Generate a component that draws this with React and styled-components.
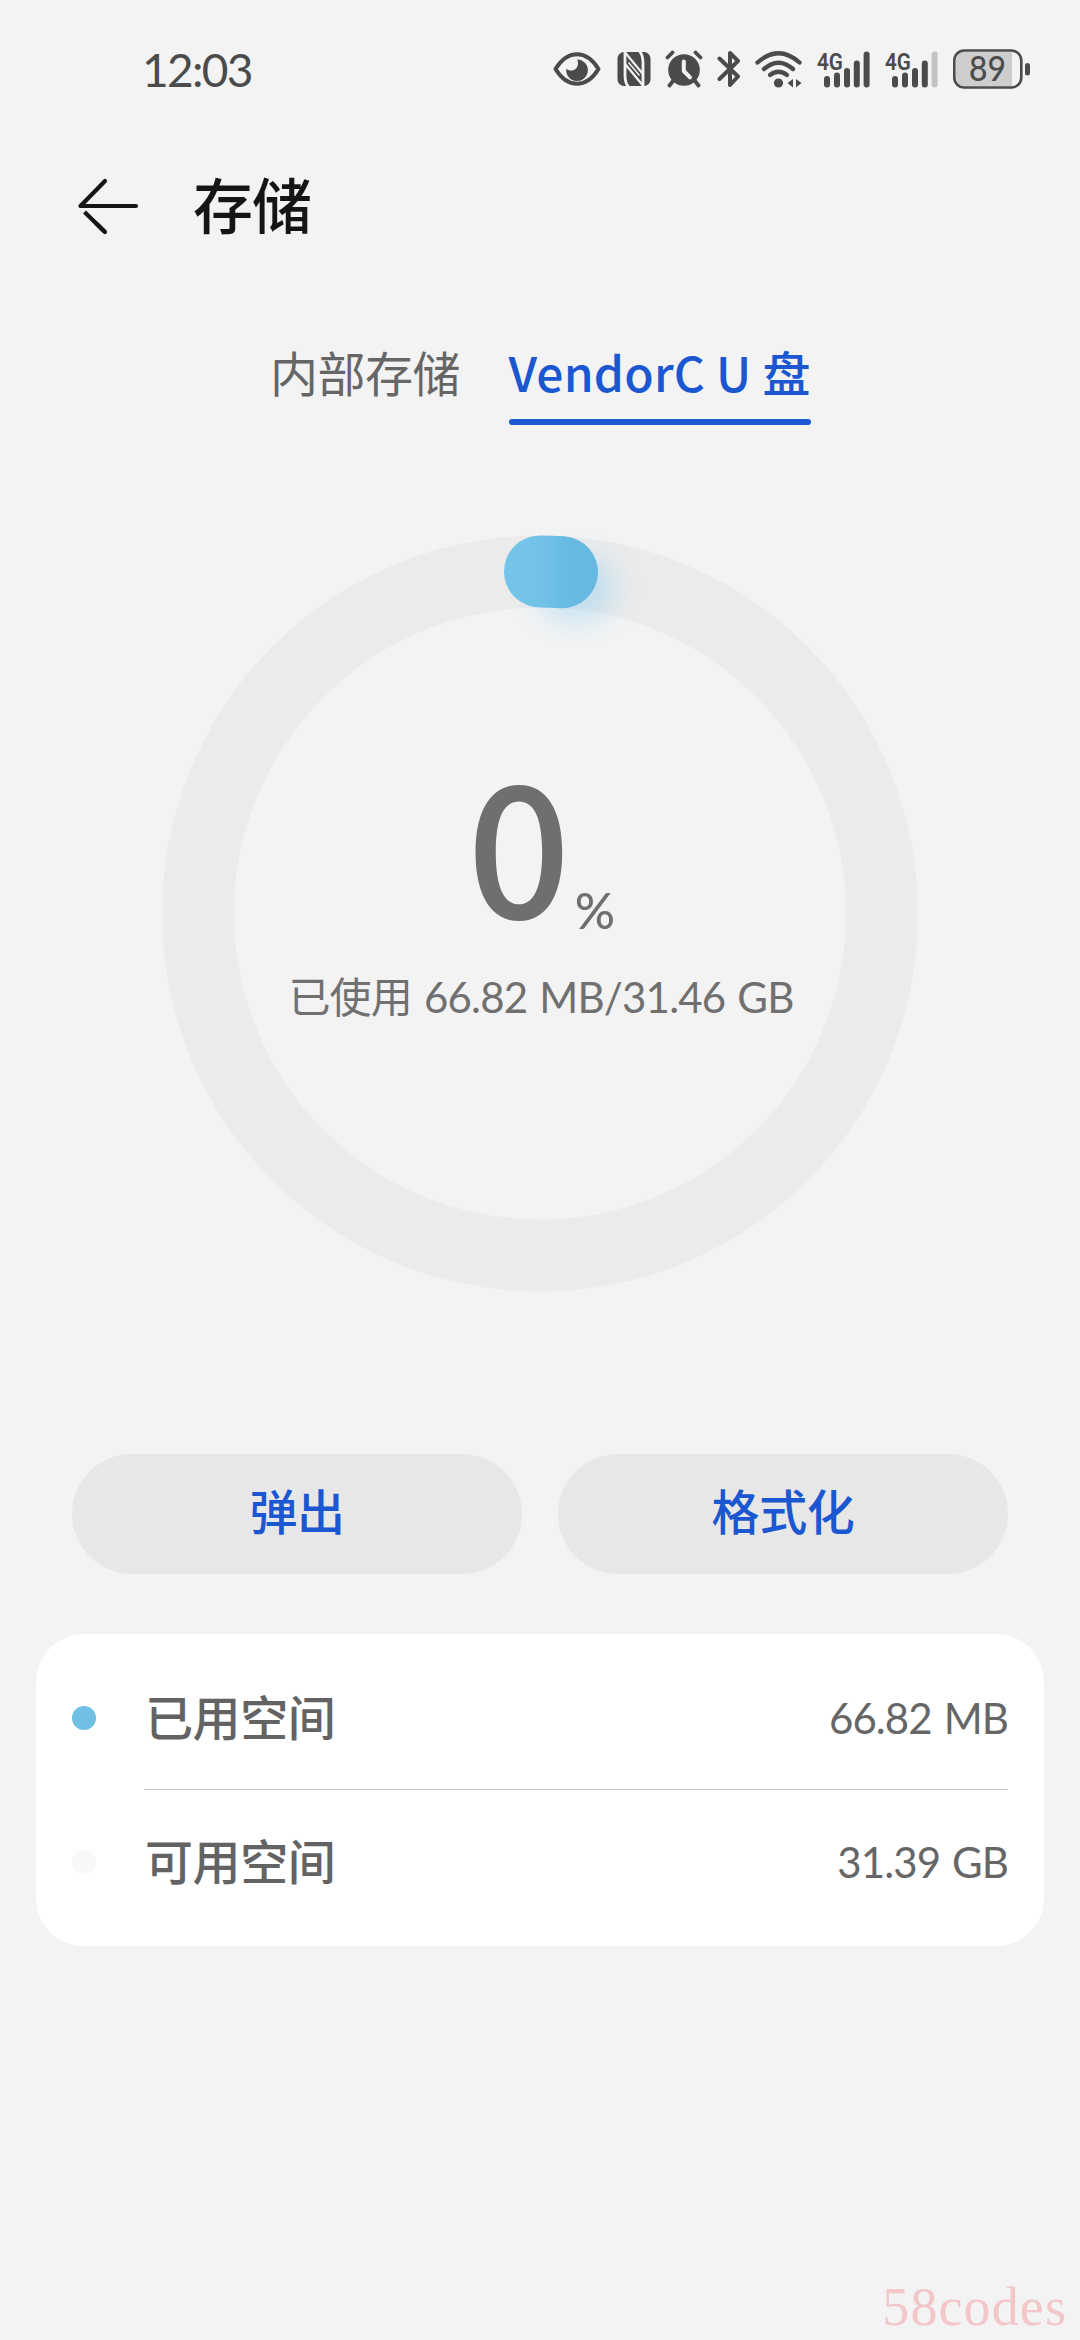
import styled, { createGlobalStyle } from "styled-components";

const GlobalStyle = createGlobalStyle`
  * {
    box-sizing: border-box;
  }

  body {
    margin: 0;
    background: #f3f3f3;
    font-family: Lato, "Noto Sans CJK SC", sans-serif;
  }
`;

const Root = styled.div`
  position: relative;
  width: 1080px;
  height: 2340px;
  overflow: hidden;
  display: flex;
  flex-direction: column;
  background: #f3f3f3;
`;

const StatusBar = styled.header`
  height: 138px;
  padding: 0 49px 0 142px;
  display: flex;
  align-items: center;
  justify-content: space-between;
  color: #4b4b4b;
`;

const Clock = styled.span`
  padding-top: 2px;
  font-size: 46px;
  line-height: 60px;
  letter-spacing: -1.7px;
`;

const StatusIcons = styled.div`
  display: flex;
  align-items: center;

  svg {
    display: block;
  }
`;

const IconSlot = styled.span`
  margin-right: ${(props) => props.$gap}px;
`;

const TitleBar = styled.div`
  height: 136px;
  padding-left: 76px;
  display: flex;
  align-items: center;

  svg {
    display: block;
  }
`;

const Title = styled.h1`
  margin: 0 0 0 53px;
  font-size: 60px;
  line-height: 80px;
  font-weight: 500;
  letter-spacing: -1px;
  color: #151515;
`;

const Tabs = styled.nav`
  height: 151px;
  padding-top: 62px;
  display: flex;
  justify-content: center;
  gap: 48px;
`;

const Tab = styled.div`
  height: 89px;
  width: ${(props) => props.$width}px;
  padding-top: 5px;
  font-family: "Noto Sans CJK SC", sans-serif;
  font-size: 48px;
  line-height: 60px;
  white-space: nowrap;
  text-align: center;
  letter-spacing: ${(props) => (props.$active ? "0.2px" : "-0.5px")};
  font-weight: ${(props) => (props.$active ? 500 : 400)};
  color: ${(props) => (props.$active ? "#1a57d0" : "#666")};

  &::after {
    content: "";
    display: block;
    margin-top: 18px;
    height: 6px;
    border-radius: 3px;
    background: ${(props) => (props.$active ? "#1a57d0" : "transparent")};
  }
`;

const Usage = styled.section`
  height: 1029px;
  padding-top: 60px;
  display: grid;
  grid-template: 860px / 1080px;

  > * {
    grid-area: 1 / 1;
  }
`;

const UsageText = styled.div`
  padding: 254px 0 0 2px;
  display: flex;
  flex-direction: column;
  align-items: center;
  color: #6f6f6f;
`;

const Percent = styled.div`
  height: 200px;
  display: flex;
  align-items: baseline;
  font-family: "Noto Sans CJK SC", sans-serif;
  font-size: 182px;
  line-height: 200px;
  font-weight: 500;
`;

const PercentSign = styled.span`
  position: relative;
  top: 11px;
  margin-left: 4px;
  font-family: Lato, sans-serif;
  font-size: 50px;
  line-height: 60px;
`;

const Caption = styled.p`
  margin: 28px 0 0;
  font-size: 42px;
  line-height: 60px;
  letter-spacing: -0.8px;
  word-spacing: 2px;
  color: #707070;
`;

const Actions = styled.div`
  padding: 0 72px;
  display: flex;
  gap: 36px;
`;

const ActionButton = styled.button`
  flex: 1;
  height: 120px;
  padding: 0 0 10px;
  border: none;
  border-radius: 60px;
  background: #e7e7e7;
  color: #1a57d0;
  font-family: inherit;
  font-size: 48px;
  font-weight: 500;
  letter-spacing: -0.4px;
`;

const Card = styled.section`
  margin: 60px 36px 0;
  padding: 12px 36px;
  border-radius: 48px;
  background: #fff;
`;

const Row = styled.div`
  height: 144px;
  display: flex;
  align-items: center;
`;

const Dot = styled.span`
  width: 24px;
  height: 24px;
  margin-right: 48px;
  border-radius: 50%;
  background: ${(props) => props.$color};
`;

const RowBody = styled.div`
  flex: 1;
  height: 144px;
  display: flex;
  align-items: center;
  justify-content: space-between;
  border-bottom: 1px solid ${(props) => (props.$divider ? "#c4c4c4" : "transparent")};
`;

const RowLabel = styled.span`
  padding: 0 0 6px 1px;
  font-size: 48px;
  font-weight: 500;
  letter-spacing: -0.4px;
  color: #636363;
`;

const RowValue = styled.span`
  font-size: 42px;
  letter-spacing: -0.9px;
  word-spacing: 2px;
  color: #666;
`;

const Watermark = styled.div`
  position: absolute;
  right: 13px;
  bottom: 4px;
  font-family: "Liberation Serif", serif;
  font-size: 54px;
  line-height: 58px;
  letter-spacing: 1.1px;
  color: #f3c6ca;
`;

const EyeIcon = () => (
  <svg width="48" height="36" viewBox="0 0 48 36" fill="none">
    <path
      d="M2.5 18C8 9 15 3.2 24 3.2S40 9 45.5 18C40 27 33 32.8 24 32.8S8 27 2.5 18Z"
      stroke="#4b4b4b"
      strokeWidth="4"
      strokeLinejoin="round"
    />
    <path
      d="M24 8.500a10.800 10.800 0 1 1-10.600 9c2.400 3 8 2.600 10.300-.8 1.900-2.900 1.500-6.400.3-8.200Z"
      fill="#4b4b4b"
    />
  </svg>
);

const NfcIcon = () => (
  <svg width="34" height="36" viewBox="0 0 34 36" fill="none" stroke="#f3f3f3">
    <rect x="0.500" y="1" width="33" height="34" rx="6.500" fill="#4b4b4b" stroke="none" />
    <path d="M8 0V24Q8 32 11.500 36M26 36V12Q26 4 22.500 0" strokeWidth="2.800" />
    <path d="M8.500 2L25.500 22.500M8.500 13.500L25.500 34" strokeWidth="2.200" />
    <path d="M11.500 11.500L22.500 24.500" strokeWidth="1.400" />
  </svg>
);

const AlarmIcon = () => (
  <svg width="38" height="38" viewBox="0 0 38 38" fill="none" strokeLinecap="round">
    <circle cx="19" cy="20" r="15.800" fill="#4b4b4b" />
    <path
      d="M2.500 7.500L7.500 2.500M30.500 2.500L35.500 7.500M8 31L4.500 35.500M30 31L33.500 35.500"
      stroke="#4b4b4b"
      strokeWidth="3.800"
    />
    <path d="M18.800 11.500V21L25 27.300" stroke="#f3f3f3" strokeWidth="4" strokeLinejoin="round" />
  </svg>
);

const BluetoothIcon = () => (
  <svg width="24" height="38" viewBox="0 0 24 38" fill="none">
    <path
      d="M2.500 8.500L21 26.500L13 35V3L21 11L2.500 29"
      stroke="#4b4b4b"
      strokeWidth="4"
      strokeLinecap="round"
      strokeLinejoin="round"
    />
  </svg>
);

const WifiIcon = () => (
  <svg width="48" height="38" viewBox="0 0 48 38" fill="none" stroke="#4b4b4b" strokeLinecap="round">
    <path d="M2.500 12.500Q23.500-6 44.500 12.500" strokeWidth="4.300" />
    <path d="M9 19Q23.500 6.500 38 19" strokeWidth="4.300" />
    <path d="M15 25Q23.500 18.500 32 25" strokeWidth="4.300" />
    <circle cx="23.500" cy="33" r="4.600" fill="#4b4b4b" stroke="none" />
    <path d="M38 29V37.500L32.500 33ZM41 29V37.500L46.500 33Z" fill="#4b4b4b" stroke="none" />
  </svg>
);

const SIGNAL_BARS = [
  { x: 7, y: 26 },
  { x: 17, y: 22.5 },
  { x: 27, y: 18 },
  { x: 36.8, y: 10.5 },
  { x: 46.6, y: 1.5 },
];

const SignalIcon = ({ level }) => (
  <svg width="54" height="54" viewBox="0 -8 54 54">
    <text
      x="0"
      y="19.5"
      fill="#4b4b4b"
      fontFamily="Roboto, sans-serif"
      fontSize="24.5"
      fontWeight="600"
      textLength="26"
      lengthAdjust="spacingAndGlyphs"
    >
      4G
    </text>
    {SIGNAL_BARS.map((bar, i) => (
      <rect
        key={bar.x}
        x={bar.x}
        y={bar.y}
        width="6"
        height={37.5 - bar.y}
        rx="3"
        fill={i < level ? "#4b4b4b" : "#c3c3c3"}
      />
    ))}
  </svg>
);

const BatteryIcon = ({ value }) => (
  <svg width="78" height="52" viewBox="0 -6 78 52">
    <path d="M12 3H59V37H12Q3 37 3 28V12Q3 3 12 3Z" fill="#cdcdcd" />
    <rect x="1.300" y="1.500" width="67" height="37" rx="10" fill="none" stroke="#4b4b4b" strokeWidth="2.600" />
    <rect x="72" y="14" width="5" height="12.500" rx="2.500" fill="#4b4b4b" />
    <text
      x="34.5"
      y="32"
      textAnchor="middle"
      fill="#4b4b4b"
      fontFamily="Lato, sans-serif"
      fontSize="34"
      fontWeight="500"
      textLength="37"
      lengthAdjust="spacingAndGlyphs"
    >
      {value}
    </text>
  </svg>
);

const BackIcon = () => (
  <svg width="64" height="60" viewBox="0 0 64 60" fill="none" stroke="#151515" strokeWidth="4.200" strokeLinecap="round">
    <path d="M29 5L4.500 30H60" strokeLinejoin="round" />
    <path d="M8.500 36L29 56" strokeLinecap="butt" />
    <path d="M20 47.200L29 56" />
  </svg>
);

const UsageRing = () => (
  <svg width="1080" height="860" viewBox="0 485 1080 860" fill="none">
    <defs>
      <linearGradient id="arc" gradientUnits="userSpaceOnUse" x1="530" y1="0" x2="575" y2="0">
        <stop offset="0" stopColor="#74c3e9" />
        <stop offset="1" stopColor="#67b9e1" />
      </linearGradient>
      <filter id="glow" x="-60%" y="-60%" width="220%" height="220%">
        <feGaussianBlur stdDeviation="14" />
      </filter>
    </defs>
    <circle cx="540" cy="913.500" r="342" stroke="#ebebeb" strokeWidth="72" />
    <ellipse cx="576" cy="588" rx="40" ry="34" fill="#8fd0f2" opacity="0.450" filter="url(#glow)" />
    <path
      d="M540 571.500A342 342 0 0 1 562 572.200"
      stroke="url(#arc)"
      strokeWidth="72"
      strokeLinecap="round"
    />
  </svg>
);

const SPACES = [
  { label: "已用空间", value: "66.82 MB", color: "#6fc0e4" },
  { label: "可用空间", value: "31.39 GB", color: "#f8f8f8" },
];

export default function App() {
  return (
    <>
      <GlobalStyle />
      <Root>
        <StatusBar>
          <Clock>12:03</Clock>
          <StatusIcons>
            <IconSlot $gap={16}>
              <EyeIcon />
            </IconSlot>
            <IconSlot $gap={14}>
              <NfcIcon />
            </IconSlot>
            <IconSlot $gap={14}>
              <AlarmIcon />
            </IconSlot>
            <IconSlot $gap={14}>
              <BluetoothIcon />
            </IconSlot>
            <IconSlot $gap={14}>
              <WifiIcon />
            </IconSlot>
            <IconSlot $gap={14}>
              <SignalIcon level={5} />
            </IconSlot>
            <IconSlot $gap={14}>
              <SignalIcon level={4} />
            </IconSlot>
            <BatteryIcon value={89} />
          </StatusIcons>
        </StatusBar>
        <TitleBar>
          <BackIcon />
          <Title>存储</Title>
        </TitleBar>
        <Tabs>
          <Tab $width={191}>内部存储</Tab>
          <Tab $width={302} $active>
            VendorC U 盘
          </Tab>
        </Tabs>
        <Usage>
          <UsageRing />
          <UsageText>
            <Percent>
              0<PercentSign>%</PercentSign>
            </Percent>
            <Caption>已使用 66.82 MB/31.46 GB</Caption>
          </UsageText>
        </Usage>
        <Actions>
          <ActionButton>弹出</ActionButton>
          <ActionButton>格式化</ActionButton>
        </Actions>
        <Card>
          {SPACES.map((space, i) => (
            <Row key={space.label}>
              <Dot $color={space.color} />
              <RowBody $divider={i < SPACES.length - 1}>
                <RowLabel>{space.label}</RowLabel>
                <RowValue>{space.value}</RowValue>
              </RowBody>
            </Row>
          ))}
        </Card>
        <Watermark>58codes</Watermark>
      </Root>
    </>
  );
}
